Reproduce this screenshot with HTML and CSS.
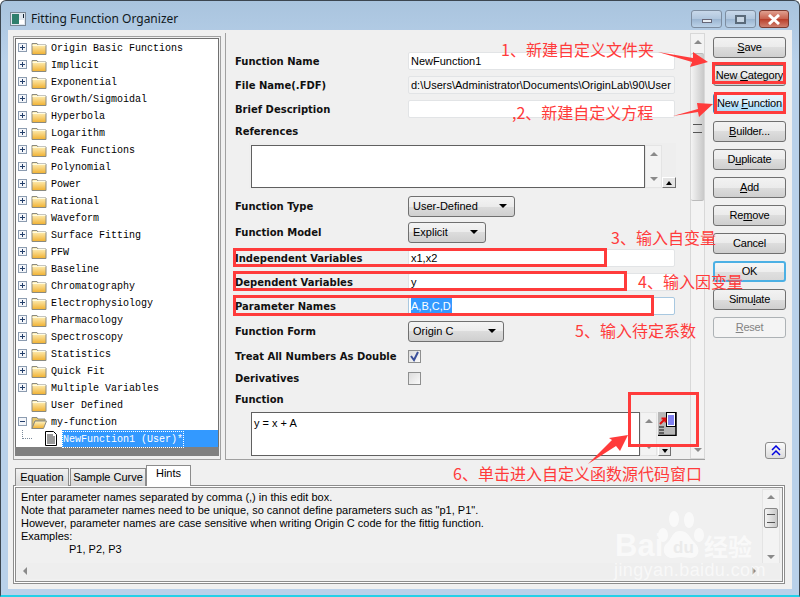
FILE: index.html
```html
<!DOCTYPE html>
<html lang="zh">
<head>
<meta charset="utf-8">
<title>Fitting Function Organizer</title>
<link rel="stylesheet" href="styles.css">
</head>
<body>
<svg class="defs" width="0" height="0">
  <defs>
    <linearGradient id="fg" x1="0" y1="0" x2="0" y2="1"><stop offset="0" stop-color="#fff6c8"/><stop offset="1" stop-color="#f0b030"/></linearGradient>
    <symbol id="folder" viewBox="0 0 16 14"><path d="M1 2.500h5l1 1.500h8v9.500H1z" fill="url(#fg)" stroke="#8a8a80"/><path d="M1.500 4.500h13" stroke="#fffbe0"/></symbol>
    <symbol id="folder-open" viewBox="0 0 16 14"><path d="M1 2.500h5l1 1.500h7v2H4L1 13.500z" fill="#e8c86a" stroke="#8a8a80"/><path d="M1 13.500l3-7.500h11.500l-3 7.500z" fill="url(#fg)" stroke="#8a8a80"/></symbol>
    <symbol id="plus" viewBox="0 0 9 9"><rect x=".5" y=".5" width="8" height="8" fill="#f4f6fa" stroke="#8c9cb0"/><path d="M2 4.500h5M4.500 2v5" stroke="#24406c"/></symbol>
    <symbol id="minus" viewBox="0 0 9 9"><rect x=".5" y=".5" width="8" height="8" fill="#f4f6fa" stroke="#8c9cb0"/><path d="M2 4.500h5" stroke="#24406c"/></symbol>
    <symbol id="doc" viewBox="0 0 12 15"><path d="M.5.500h8l3 3v11H.500z" fill="#fff" stroke="#000"/><path d="M2 4h6M2 6h8M2 8h8M2 10h8M2 12h8" stroke="#333"/></symbol>
  </defs>
</svg>
<div class="window">
  <header class="titlebar">
    <svg class="app-icon" width="16" height="14" viewBox="0 0 16 14"><rect x=".5" y=".5" width="15" height="13" fill="#dfe6ee" stroke="#7a8794"/><rect x="2" y="2" width="7" height="10" fill="#2f7f6d"/><rect x="9" y="8" width="5" height="4" fill="#fff"/><rect x="13" y="2" width="1" height="4" fill="#123"/></svg>
    <span class="title">Fitting Function Organizer</span>
    <div class="caption">
      <span class="cap cap-min"><i class="glyph-min"></i></span>
      <span class="cap cap-max"><i class="glyph-max"></i></span>
      <span class="cap cap-close"><svg width="14" height="11" viewBox="0 0 14 11"><path d="M2 1l10 9M12 1L2 10" stroke="#fff" stroke-width="3"/></svg></span>
    </div>
  </header>
  <div class="client">
    <div class="top">
      <div class="tree">
        <div class="tree-list">
          <div class="node"><svg class="exp"><use href="#plus"/></svg><svg class="fold"><use href="#folder"/></svg><span>Origin Basic Functions</span></div>
          <div class="node"><svg class="exp"><use href="#plus"/></svg><svg class="fold"><use href="#folder"/></svg><span>Implicit</span></div>
          <div class="node"><svg class="exp"><use href="#plus"/></svg><svg class="fold"><use href="#folder"/></svg><span>Exponential</span></div>
          <div class="node"><svg class="exp"><use href="#plus"/></svg><svg class="fold"><use href="#folder"/></svg><span>Growth/Sigmoidal</span></div>
          <div class="node"><svg class="exp"><use href="#plus"/></svg><svg class="fold"><use href="#folder"/></svg><span>Hyperbola</span></div>
          <div class="node"><svg class="exp"><use href="#plus"/></svg><svg class="fold"><use href="#folder"/></svg><span>Logarithm</span></div>
          <div class="node"><svg class="exp"><use href="#plus"/></svg><svg class="fold"><use href="#folder"/></svg><span>Peak Functions</span></div>
          <div class="node"><svg class="exp"><use href="#plus"/></svg><svg class="fold"><use href="#folder"/></svg><span>Polynomial</span></div>
          <div class="node"><svg class="exp"><use href="#plus"/></svg><svg class="fold"><use href="#folder"/></svg><span>Power</span></div>
          <div class="node"><svg class="exp"><use href="#plus"/></svg><svg class="fold"><use href="#folder"/></svg><span>Rational</span></div>
          <div class="node"><svg class="exp"><use href="#plus"/></svg><svg class="fold"><use href="#folder"/></svg><span>Waveform</span></div>
          <div class="node"><svg class="exp"><use href="#plus"/></svg><svg class="fold"><use href="#folder"/></svg><span>Surface Fitting</span></div>
          <div class="node"><svg class="exp"><use href="#plus"/></svg><svg class="fold"><use href="#folder"/></svg><span>PFW</span></div>
          <div class="node"><svg class="exp"><use href="#plus"/></svg><svg class="fold"><use href="#folder"/></svg><span>Baseline</span></div>
          <div class="node"><svg class="exp"><use href="#plus"/></svg><svg class="fold"><use href="#folder"/></svg><span>Chromatography</span></div>
          <div class="node"><svg class="exp"><use href="#plus"/></svg><svg class="fold"><use href="#folder"/></svg><span>Electrophysiology</span></div>
          <div class="node"><svg class="exp"><use href="#plus"/></svg><svg class="fold"><use href="#folder"/></svg><span>Pharmacology</span></div>
          <div class="node"><svg class="exp"><use href="#plus"/></svg><svg class="fold"><use href="#folder"/></svg><span>Spectroscopy</span></div>
          <div class="node"><svg class="exp"><use href="#plus"/></svg><svg class="fold"><use href="#folder"/></svg><span>Statistics</span></div>
          <div class="node"><svg class="exp"><use href="#plus"/></svg><svg class="fold"><use href="#folder"/></svg><span>Quick Fit</span></div>
          <div class="node"><svg class="exp"><use href="#plus"/></svg><svg class="fold"><use href="#folder"/></svg><span>Multiple Variables</span></div>
          <div class="node"><span class="exp-none"></span><svg class="fold"><use href="#folder"/></svg><span>User Defined</span></div>
          <div class="node"><svg class="exp"><use href="#minus"/></svg><svg class="fold"><use href="#folder-open"/></svg><span>my-function</span></div>
          <div class="node node-leaf"><span class="branch"></span><svg class="doc"><use href="#doc"/></svg><span class="sel-text"><span class="sel-label">NewFunction1 (User)*</span></span></div>
        </div>
        <div class="tree-foot"></div>
      </div>
      <main class="panel">
        <div class="form">
          <div class="row"><label>Function Name</label><div class="input">NewFunction1</div></div>
          <div class="row"><label>File Name(.FDF)</label><div class="input input-ro">d:\Users\Administrator\Documents\OriginLab\90\User</div></div>
          <div class="row row-brief"><label>Brief Description</label><div class="input"></div></div>
          <div class="row row-ref"><label>References</label></div>
          <div class="memo memo-ref">
            <div class="memo-text"></div>
            <div class="vscroll"><i class="up"></i><i class="down"></i></div>
            <span class="mini-btn"><i class="up-black"></i></span>
          </div>
          <div class="row row-combo"><label>Function Type</label><div class="combo combo-type">User-Defined<i class="drop"></i></div></div>
          <div class="row row-combo row-model"><label>Function Model</label><div class="combo combo-model">Explicit<i class="drop"></i></div></div>
          <div class="row row-var"><label>Independent Variables</label><div class="input">x1,x2</div></div>
          <div class="row"><label>Dependent Variables</label><div class="input">y</div></div>
          <div class="row"><label>Parameter Names</label><div class="input input-active"><span class="selected">A,B,C,D</span></div></div>
          <div class="row row-combo row-form"><label>Function Form</label><div class="combo combo-form">Origin C<i class="drop"></i></div></div>
          <div class="row row-check"><label>Treat All Numbers As Double</label><span class="check"><svg width="11" height="11" viewBox="0 0 11 11"><path d="M2 5l3 4 4-8" fill="none" stroke="#3a4f9a" stroke-width="2"/></svg></span></div>
          <div class="row row-check row-deriv"><label>Derivatives</label><span class="check"></span></div>
          <div class="row row-fn"><label>Function</label></div>
          <div class="memo memo-fn">
            <div class="memo-text">y = x + A</div>
            <div class="vscroll vscroll-fn"><i class="up"></i><i class="down"></i></div>
            <div class="memo-side">
              <svg width="19" height="24" viewBox="0 0 19 24"><rect width="18" height="23" fill="#b8b8b8"/><path d="M18 0v23.500H0" fill="none" stroke="#000" stroke-width="1.500"/><rect x="8.500" y=".5" width="9" height="14" fill="#fff" stroke="#000"/><path d="M10 4h6M10 6h6M10 8h6M10 10h6M10 12h6" stroke="#0000e0"/><path d="M2 12l5-5M3.500 6.500H7.500V10.500" fill="none" stroke="#e01010" stroke-width="2"/><path d="M1 15h5M1 18h5M1 21h5" stroke="#606060" stroke-width="2"/></svg>
              <span class="mini-btn mini-btn-fn"><i class="down-black"></i></span>
            </div>
          </div>
        </div>
        <div class="vscroll vscroll-main"><i class="up"></i><span class="thumb"></span><i class="down"></i></div>
      </main>
      <aside class="actions">
        <button class="btn"><u>S</u>ave</button>
        <button class="btn">New <u>C</u>ategory</button>
        <button class="btn btn-hot">New <u>F</u>unction</button>
        <button class="btn"><u>B</u>uilder...</button>
        <button class="btn">D<u>u</u>plicate</button>
        <button class="btn"><u>A</u>dd</button>
        <button class="btn">Re<u>m</u>ove</button>
        <button class="btn">Cancel</button>
        <button class="btn btn-default">OK</button>
        <button class="btn">Simu<u>l</u>ate</button>
        <button class="btn btn-off"><u>R</u>eset</button>
        <button class="chevron"><svg width="10" height="11" viewBox="0 0 10 11"><path d="M1 5l4-4 4 4M1 10l4-4 4 4" fill="none" stroke="#0000e0" stroke-width="1.500"/></svg></button>
      </aside>
    </div>
    <div class="tabs">
      <span class="tab">Equation</span>
      <span class="tab tab-curve">Sample Curve</span>
      <span class="tab tab-on">Hints</span>
    </div>
    <section class="hints">
      <div class="hints-inner">
        <div class="hints-text">
          <p>Enter parameter names separated by comma (,) in this edit box.</p>
          <p>Note that parameter names need to be unique, so cannot define parameters such as "p1, P1".</p>
          <p>However, parameter names are case sensitive when writing Origin C code for the fittig function.</p>
          <p>Examples:</p>
          <p class="indent">P1, P2, P3</p>
        </div>
        <div class="vscroll vscroll-hints"><i class="up"></i><span class="thumb thumb-hints"></span><i class="down"></i></div>
        <div class="hscroll"><i class="left"></i><i class="right"></i></div>
      </div>
    </section>
  </div>
</div>

<div class="mark mark-cat"></div>
<div class="mark mark-fn"></div>
<div class="mark mark-ind"></div>
<div class="mark mark-dep"></div>
<div class="mark mark-par"></div>
<div class="mark mark-src"></div>
<svg class="arrows" width="800" height="597" viewBox="0 0 800 597">
  <path d="M658 52L693 58 693 52 708 62 690 67 692 62z" fill="#ff3b3b"/>
  <path d="M673 116L698 109 697 103 713 104 699 117 698 112z" fill="#ff3b3b"/>
  <path d="M588 464L612 440 609 438 628 435 620 451 616 446z" fill="#ff3b3b"/>
</svg>
<span class="note note-1">1、新建自定义文件夹</span>
<span class="note note-2">,2、新建自定义方程</span>
<span class="note note-3">3、输入自变量</span>
<span class="note note-4">4、输入因变量</span>
<span class="note note-5">5、输入待定系数</span>
<span class="note note-6">6、单击进入自定义函数源代码窗口</span>

<div class="wm">
  <svg class="wm-paw" width="46" height="50" viewBox="0 0 46 50"><g fill="#fff"><ellipse cx="5" cy="24" rx="5" ry="7"/><ellipse cx="16" cy="8" rx="5" ry="8"/><ellipse cx="31" cy="9" rx="5" ry="8"/><ellipse cx="41" cy="24" rx="5" ry="7"/><path d="M22 20c-8 0-8 8-13 12-6 5-3 15 5 15 4 0 6-1 9-1s6 1 10 1c8 0 10-9 4-15-5-4-6-12-15-12z"/></g></svg>
  <span class="wm-bai">Bai</span>
  <span class="wm-du">du</span>
  <span class="wm-jy">经验</span>
  <span class="wm-url">jingyan.baidu.com</span>
</div>
</body>
</html>
```

FILE: styles.css
```css
* { box-sizing: border-box; }
html, body { margin: 0; padding: 0; }
body { width: 800px; height: 597px; overflow: hidden; position: relative; background: #fff; font-family: "Liberation Sans", Arial, sans-serif; }
.defs { position: absolute; }

.window {
  width: 800px; height: 597px; display: flex; flex-direction: column;
  background: linear-gradient(180deg, #a9c4de 0, #b9d1ea 60px, #b9d1ea 100%);
  border: 1px solid #3c4650; border-bottom: 2px solid #24d0e8; border-radius: 6px 6px 0 0;
  padding: 0 7px 6px;
}
.titlebar { height: 29px; display: flex; align-items: center; flex: none; padding-top: 7px; }
.app-icon { margin: 0 5px 0 2px; flex: none; }
.title { font: 12px/16px "Noto Sans", sans-serif; color: #101820; }
.caption { margin-left: auto; display: flex; gap: 3px; align-self: flex-start; margin-top: 2px; margin-right: 3px; }
.cap { width: 31px; height: 18px; border: 1px solid #7d8da0; border-radius: 3px; display: flex; align-items: center; justify-content: center;
  background: linear-gradient(180deg, #c8d8ea 0, #b0c6de 50%, #9ab4d0 50%, #bcd2e8 100%); }
.cap-close { width: 30px; border-color: #7a3a30; background: linear-gradient(180deg, #e0a090 0, #c8604c 50%, #b83c28 50%, #d08070 100%); }
.glyph-min { width: 10px; height: 4px; margin-top: 4px; background: #e8eef4; border: 1px solid #667; }
.glyph-max { width: 11px; height: 9px; border: 2px solid #5a6a7a; background: #c8d6e4; }

.client { flex: 1; background: #f0f0f0; display: flex; flex-direction: column; padding: 3px 5px 0 5px; min-height: 0; }
.top { display: flex; height: 430px; flex: none; align-items: flex-start; }

.tree { width: 208px; height: 424px; margin-top: 3px; border: 1px solid #a0a0a0; padding: 1px; background: #f0f0f0; display: flex; flex-direction: column; flex: none; }
.tree-list { background: #fff; border: 1px solid #707070; border-bottom: 0; height: 409px; flex: none; }
.node { height: 17px; display: flex; align-items: center; font: 10px/17px "Liberation Mono", "DejaVu Sans Mono", monospace; color: #000; white-space: pre; padding-left: 2px; }
.node > span:last-child { padding-top: 1px; }
.exp { width: 9px; height: 9px; flex: none; }
.exp-none { width: 9px; height: 9px; flex: none; }
.fold { width: 16px; height: 14px; margin-left: 4px; margin-right: 4px; flex: none; }
.node-leaf { position: relative; padding-left: 29px; }
.branch { position: absolute; left: 6px; top: 0; width: 10px; height: 9px; border-left: 1px dotted #7a8a9a; border-bottom: 1px dotted #7a8a9a; }
.doc { width: 12px; height: 15px; margin-right: 5px; flex: none; }
.node > .sel-text { flex: 1; height: 17px; background: #3399ff; color: #fff; padding-top: 0; }
.sel-label { display: inline-block; outline: 1px dotted #fff; outline-offset: -1px; height: 17px; padding: 0 1px; line-height: 18px; }
.tree-foot { height: 9px; background: #808080; flex: none; }

.panel { width: 480px; height: 427px; margin-left: 4px; border-left: 1px solid #a0a0a0; border-bottom: 1px solid #a0a0a0; display: flex; position: relative; flex: none; }
.form { flex: 1; padding: 19px 0 0 9px; font-size: 11px; display: flex; flex-direction: column; min-width: 0; }
.row { height: 18px; display: flex; align-items: center; margin-bottom: 6px; flex: none; }
.row label { width: 173px; flex: none; font: bold 10px/14px "DejaVu Sans", sans-serif; color: #111; white-space: nowrap; padding-top: 1px; }
.input { width: 267px; height: 18px; background: #fff; border: 1px solid #e2e4e6; border-radius: 2px; font: 11px/16px "Liberation Sans", sans-serif; padding-left: 2px; color: #000; white-space: nowrap; overflow: hidden; }
.input-ro { background: #f4f4f4; }
.input-active { border-color: #a8c8e0; }
.selected { background: #3399ff; color: #fff; padding-right: 1px; display: inline-block; height: 16px; }
.row-brief { margin-bottom: 4px; }
.row-ref { margin-bottom: 3px; }
.memo { display: flex; position: relative; flex: none; }
.memo-ref { margin-left: 14px; height: 46px; width: 427px; padding: 2px 0 1px 2px; background: #eee; margin-bottom: 7px; }
.memo-text { width: 394px; background: #fff; border: 1px solid #606060; font: 11px/14px "Liberation Sans", sans-serif; padding: 3px 2px 2px; }
.vscroll { width: 16px; background: #f3f3f3; border: 1px solid #e4e4e4; display: flex; flex-direction: column; align-items: center; justify-content: space-between; padding: 6px 0; }
.memo-ref .vscroll { width: 17px; }
.up, .down { width: 0; height: 0; border-left: 4px solid transparent; border-right: 4px solid transparent; }
.up { border-bottom: 4px solid #8a8a8a; }
.down { border-top: 4px solid #8a8a8a; }
.mini-btn { width: 14px; height: 11px; background: #e4e4e4; border: 1px solid #fff; border-right-color: #707070; border-bottom-color: #707070; display: flex; align-items: center; justify-content: center; align-self: flex-end; flex: none; }
.up-black, .down-black { width: 0; height: 0; border-left: 3px solid transparent; border-right: 3px solid transparent; }
.up-black { border-bottom: 4px solid #000; }
.down-black { border-top: 4px solid #000; }
.row-combo { height: 21px; margin-bottom: 5px; }
.row-model { margin-bottom: 6px; }
.combo { height: 21px; border: 1px solid #707070; border-radius: 3px; background: linear-gradient(180deg, #f4f4f4 0, #ebebeb 50%, #dcdcdc 50%, #cfcfcf 100%); font: 11px/19px "Liberation Sans", sans-serif; padding-left: 4px; position: relative; color: #000; }
.combo-type { width: 107px; }
.combo-model { width: 78px; }
.combo-form { width: 96px; }
.drop { position: absolute; right: 7px; top: 7px; width: 0; height: 0; border-left: 4px solid transparent; border-right: 4px solid transparent; border-top: 4px solid #000; }
.row-form { margin-bottom: 6px; }
.row-check { height: 16px; margin-bottom: 6px; }
.check { width: 13px; height: 13px; border: 1px solid #8e8f8f; background: linear-gradient(135deg, #dcdcdc, #fafafa); display: flex; align-items: center; justify-content: center; }
.row-fn { height: 14px; margin-bottom: 6px; }
.memo-fn { margin-left: 16px; height: 44px; }
.memo-fn .memo-text { width: 389px; }
.vscroll-fn { width: 17px; }
.memo-side { display: flex; flex-direction: column; justify-content: space-between; margin-left: 1px; }
.mini-btn-fn { align-self: flex-start; width: 13px; }
.vscroll-main { width: 15px; margin-left: auto; flex: none; border-color: #d8d8d8; height: 426px; position: relative; }
.thumb { width: 13px; height: 148px; position: absolute; left: 0; top: 19px; background: linear-gradient(90deg, #f4f4f4, #c8c8c8); border-top: 1px solid #bbb; border-bottom: 1px solid #bbb; border-radius: 2px; }
.thumb::after { content: ""; position: absolute; left: 2px; right: 2px; top: 70px; height: 7px; border-top: 1px solid #555; border-bottom: 1px solid #555; }

.actions { width: 74px; margin-left: 8px; margin-top: 4px; display: flex; flex-direction: column; gap: 7px; position: relative; height: 424px; flex: none; }
.btn { width: 73px; height: 21px; padding: 0; border: 1px solid #707070; border-radius: 3px; background: linear-gradient(180deg, #f2f2f2 0, #ebebeb 50%, #dddddd 50%, #cfcfcf 100%); font: 11px/17px "Liberation Sans", sans-serif; letter-spacing: -.2px; color: #000; white-space: nowrap; flex: none; }
.btn-hot { background: linear-gradient(180deg, #eaf6fd 0, #d9f0fc 50%, #bee6fd 50%, #a7d9f5 100%); border-color: #3c7fb1; }
.btn-default { border: 2px solid #4cb0e4; background: linear-gradient(180deg, #f6f6f6 0, #eee 50%, #e0e0e0 50%, #d8d8d8 100%); line-height: 15px; }
.btn-off { background: #f4f4f4; border-color: #adb2b5; color: #838383; }
.chevron { position: absolute; left: 52px; top: 405px; width: 21px; height: 17px; padding: 0; border: 1px solid #8a8a8a; border-radius: 3px; background: linear-gradient(180deg, #fafafa, #dcdcdc); display: flex; align-items: center; justify-content: center; }

.tabs { display: flex; align-items: flex-end; height: 22px; padding-left: 2px; margin-top: 1px; position: relative; z-index: 1; margin-bottom: -1px; flex: none; }
.tab { height: 18px; border: 1px solid #8c8c8c; border-bottom: 0; background: linear-gradient(180deg, #f2f2f2, #d8d8d8); font: 11px/17px "Liberation Sans", sans-serif; width: 54px; text-align: center; color: #000; margin-right: 1px; white-space: nowrap; }
.tab-curve { width: 76px; margin-right: 0; }
.tab-on { width: 45px; height: 21px; background: #fff; line-height: 15px; }

.hints { width: 772px; height: 99px; border: 1px solid #8c8c8c; background: #fff; padding: 1px; flex: none; }
.hints-inner { height: 100%; border: 1px solid #8c8c8c; background: #f0f0f0; position: relative; padding: 3px 0 0 5px; }
.hints-text { font: 11px/13px "Liberation Sans", sans-serif; color: #000; white-space: nowrap; }
.hints-text p { margin: 0; }
.indent { padding-left: 48px; }
.vscroll-hints { position: absolute; right: 2px; top: 1px; bottom: 16px; width: 18px; padding: 5px 0; }
.thumb-hints { left: 1px; top: 18px; width: 14px; height: 20px; border: 1px solid #888; }
.thumb-hints::after { top: 5px; }
.hscroll { position: absolute; left: 1px; right: 2px; bottom: 2px; height: 16px; background: #eee; display: flex; justify-content: space-between; align-items: center; padding: 0 24px 0 6px; }
.left, .right { width: 0; height: 0; border-top: 4px solid transparent; border-bottom: 4px solid transparent; }
.left { border-right: 4px solid #8a8a8a; }
.right { border-left: 4px solid #8a8a8a; }

/* annotation layer drawn over the screenshot */
.mark { position: absolute; border: 3px solid #ff3b3b; }
.mark-cat { left: 712px; top: 62px; width: 74px; height: 22px; }
.mark-fn { left: 714px; top: 92px; width: 72px; height: 22px; }
.mark-ind { left: 233px; top: 248px; width: 374px; height: 19px; }
.mark-dep { left: 233px; top: 271px; width: 394px; height: 20px; }
.mark-par { left: 233px; top: 295px; width: 421px; height: 21px; }
.mark-src { left: 628px; top: 392px; width: 71px; height: 55px; }
.arrows { position: absolute; left: 0; top: 0; pointer-events: none; }
.note { position: absolute; font: 16px/20px "Noto Sans CJK SC", sans-serif; color: #ff3b3b; white-space: nowrap; }
.note-1 { left: 501px; top: 39px; }
.note-2 { left: 512px; top: 102px; }
.note-3 { left: 611px; top: 227px; }
.note-4 { left: 638px; top: 271px; }
.note-5 { left: 575px; top: 320px; }
.note-6 { left: 453px; top: 463px; }

.wm { position: absolute; left: 610px; top: 505px; width: 170px; height: 85px; color: #fff; opacity: .62; font-family: "Liberation Sans", sans-serif; }
.wm span { position: absolute; white-space: nowrap; }
.wm-paw { position: absolute; left: 48px; top: 6px; }
.wm-bai { left: 5px; top: 24px; font: bold 31px/34px "Liberation Sans", sans-serif; }
.wm-du { left: 63px; top: 33px; font: bold 17px/20px "Liberation Sans", sans-serif; color: #e8e8e8; }
.wm-jy { left: 94px; top: 26px; font: bold 24px/30px "Noto Sans CJK SC", sans-serif; }
.wm-url { left: 4px; top: 54px; font: 18px/22px "Liberation Sans", sans-serif; letter-spacing: .4px; }
```
